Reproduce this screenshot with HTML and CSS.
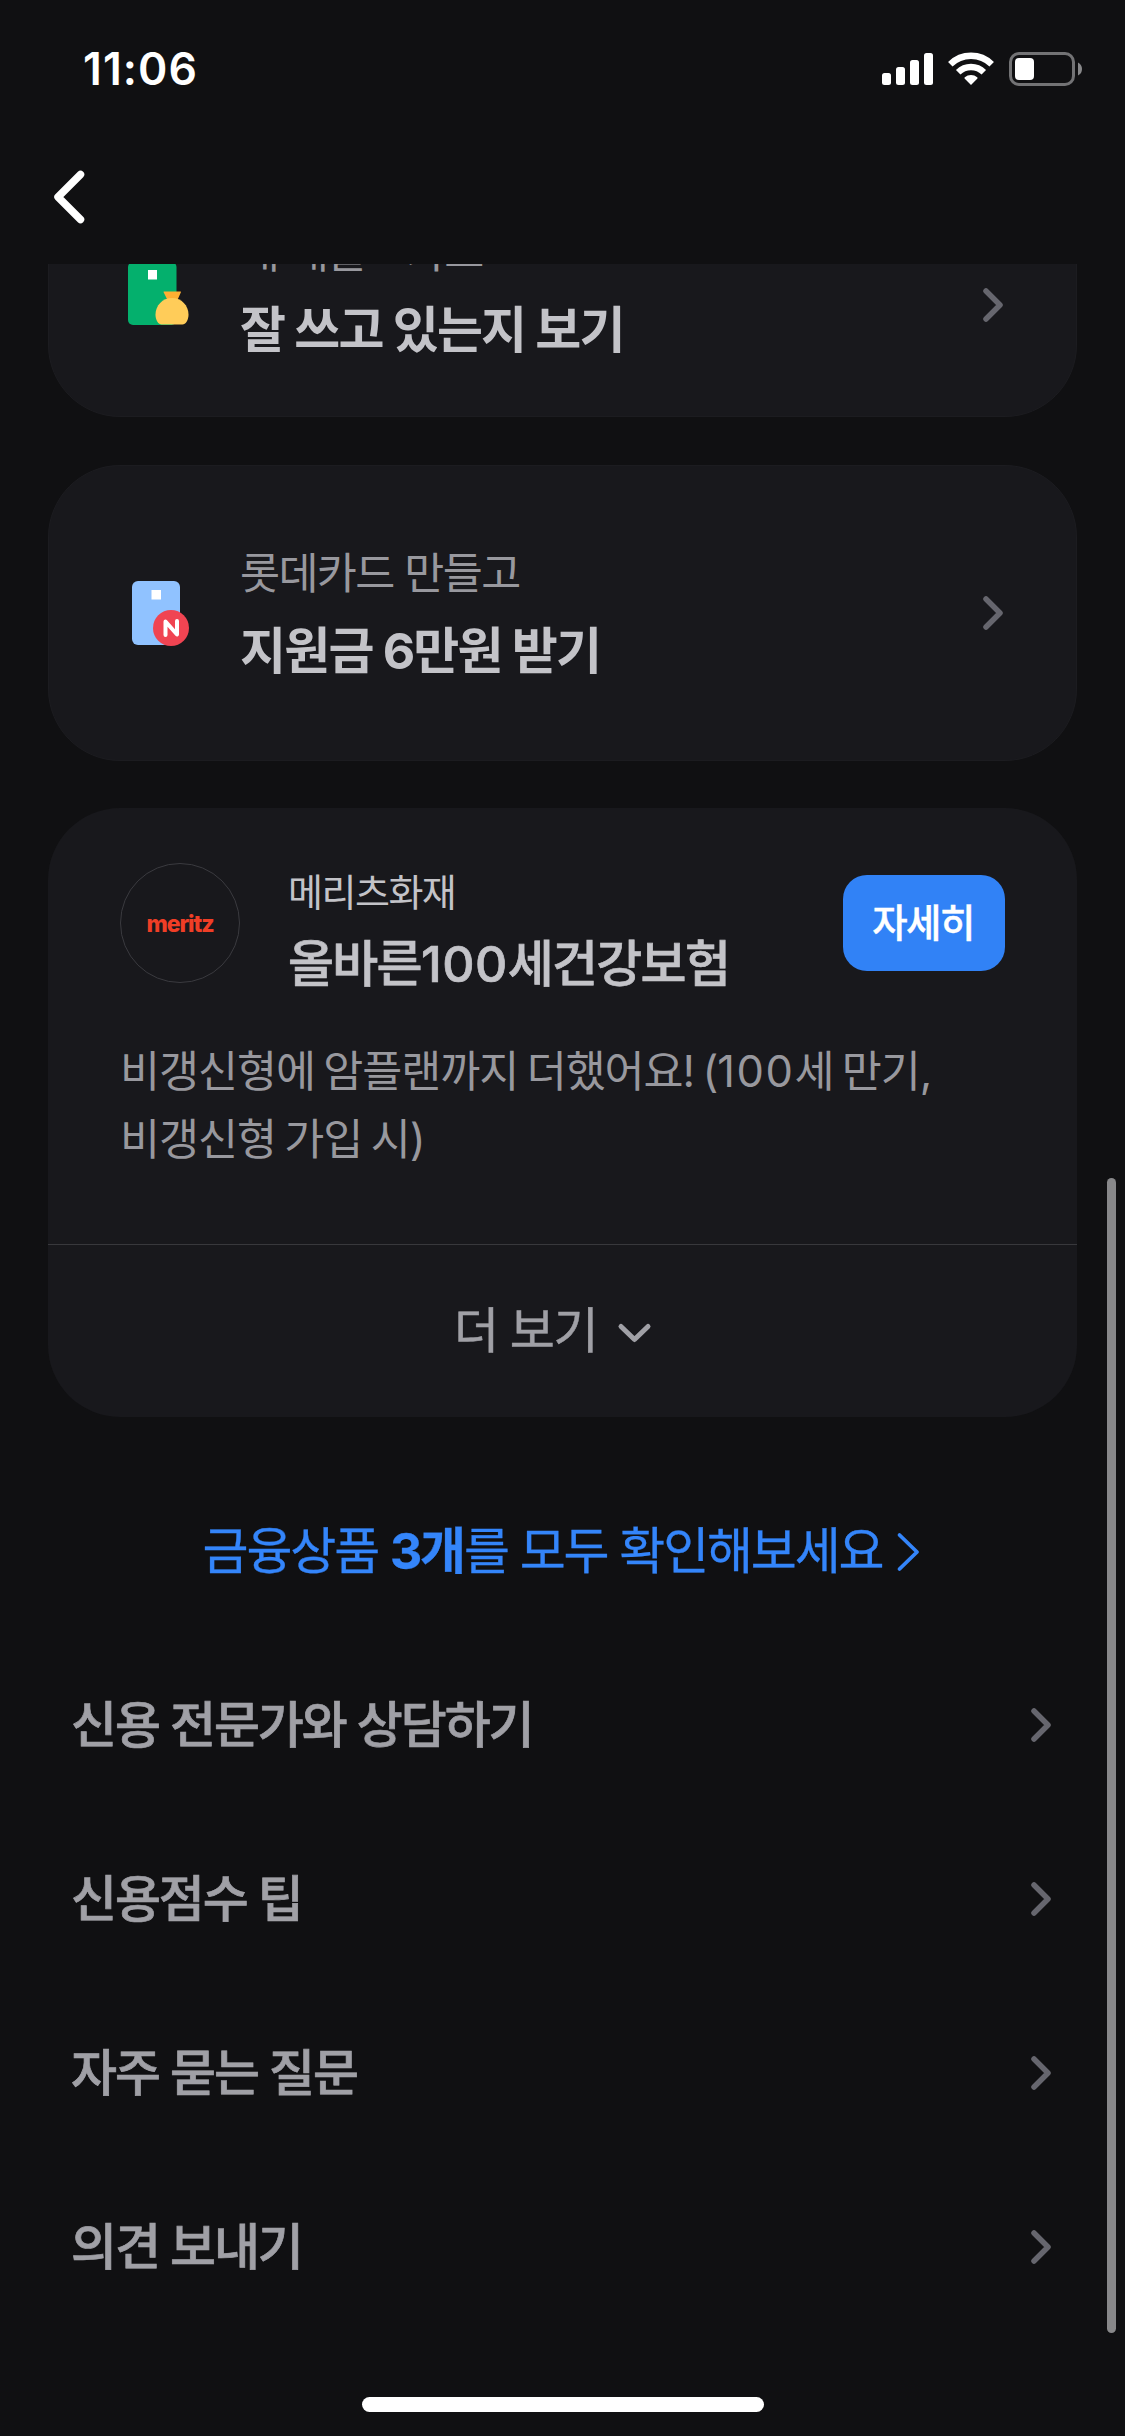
FILE: index.html
```html
<!DOCTYPE html>
<html lang="ko">
<head>
<meta charset="utf-8">
<title>신용관리</title>
<link rel="stylesheet" href="styles.css">
</head>
<body>
<div class="screen">
  <header class="top">
    <div class="status">
      <span class="clock">11:06</span>
      <svg class="status-icons" width="204" height="40" viewBox="0 0 204 40">
        <g fill="#fff">
          <rect x="2" y="23" width="9" height="12" rx="2.5"/>
          <rect x="16" y="17" width="9" height="18" rx="2.5"/>
          <rect x="30" y="10" width="9" height="25" rx="2.5"/>
          <rect x="44" y="3" width="9" height="32" rx="2.5"/>
          <rect x="135" y="8" width="19" height="22" rx="4"/>
          <path d="M91 35l-6.200-6.200a1 1 0 0 1 0-1.500a9.500 9.500 0 0 1 12.400 0a1 1 0 0 1 0 1.500z"/>
        </g>
        <g fill="none" stroke="#fff" stroke-width="6.400">
          <path d="M70.300 14.300a29.500 29.500 0 0 1 41.400 0"/>
          <path d="M78.200 22.300a18.200 18.200 0 0 1 25.600 0"/>
        </g>
        <rect x="130.500" y="3.500" width="63" height="31" rx="8.500" fill="none" stroke="#737375" stroke-width="3"/>
        <path d="M198 12.500q4 2 4 6.500t-4 6.500z" fill="#88888a"/>
      </svg>
    </div>
    <svg class="back" width="36" height="60" viewBox="0 0 36 60"><path d="M30.500 7.500L8 30l22.500 22.500" fill="none" stroke="#fff" stroke-width="7.500" stroke-linecap="round" stroke-linejoin="round"/></svg>
  </header>

  <main class="scroll">
    <a class="card promo promo-first">
      <svg class="promo-icon" width="72" height="72" viewBox="0 0 72 72">
        <rect x="8" y="5" width="48.500" height="63" rx="5" fill="#04b06d"/>
        <rect x="28" y="13" width="9" height="9.500" fill="#fff"/>
        <path d="M44 34.500h16.500q.8 0 .4.800L57.500 43h-10l-3.900-7.700q-.4-.8.400-.8z" fill="#ffaf32"/>
        <path d="M52 41c9.500 0 16.500 7.500 16.500 16.500c0 6-3 10-6 10H41.500c-3 0-6-4-6-10C35.500 48.500 42.500 41 52 41z" fill="#ffcc59"/>
      </svg>
      <div class="promo-text">
        <p class="promo-sub">내 대출<span class="dot">·</span>카드</p>
        <p class="promo-title">잘 쓰고 있는지 보기</p>
      </div>
      <svg class="chev" width="24" height="36" viewBox="0 0 24 36"><path d="M5 4L19 18L5 32"/></svg>
    </a>

    <a class="card promo">
      <svg class="promo-icon" width="72" height="72" viewBox="0 0 72 72">
        <rect x="12" y="4" width="48" height="64" rx="6" fill="#90c2ff"/>
        <rect x="31.500" y="13" width="9.500" height="9.500" fill="#fff"/>
        <circle cx="51" cy="51" r="18" fill="#f04452"/>
        <path d="M45.500 58V44.500L57 57.500V44" fill="none" stroke="#fff" stroke-width="4" stroke-linecap="round" stroke-linejoin="round"/>
      </svg>
      <div class="promo-text">
        <p class="promo-sub">롯데카드 만들고</p>
        <p class="promo-title">지원금 6만원 받기</p>
      </div>
      <svg class="chev" width="24" height="36" viewBox="0 0 24 36"><path d="M5 4L19 18L5 32"/></svg>
    </a>

    <section class="card offer">
      <div class="offer-head">
        <div class="logo">meritz</div>
        <div class="offer-text">
          <p class="offer-company">메리츠화재</p>
          <p class="offer-name">올바른<span class="num">100</span>세건강보험</p>
        </div>
        <button class="detail" type="button">자세히</button>
      </div>
      <p class="offer-desc">비갱신형에 암플랜까지 더했어요! (<span class="num">100</span>세 만기,<br>비갱신형 가입 시)</p>
      <a class="more">
        <span>더 보기</span>
        <svg width="36" height="24" viewBox="0 0 36 24"><path d="M4 4.500L17.500 17.500L31 4.500" fill="none" stroke="#a0a0a6" stroke-width="5" stroke-linecap="round" stroke-linejoin="round"/></svg>
      </a>
    </section>

    <a class="all">
      <span>금융상품 <b>3개</b>를 모두 확인해보세요</span>
      <svg width="24" height="42" viewBox="0 0 24 42"><path d="M3.500 4L21 21L3.500 38" fill="none" stroke="#3485fa" stroke-width="3.800" stroke-linecap="round" stroke-linejoin="round"/></svg>
    </a>

    <nav class="links">
      <a class="link"><span>신용 전문가와 상담하기</span><svg class="chev" width="24" height="36" viewBox="0 0 24 36"><path d="M5 4L19 18L5 32"/></svg></a>
      <a class="link"><span>신용점수 팁</span><svg class="chev" width="24" height="36" viewBox="0 0 24 36"><path d="M5 4L19 18L5 32"/></svg></a>
      <a class="link"><span>자주 묻는 질문</span><svg class="chev" width="24" height="36" viewBox="0 0 24 36"><path d="M5 4L19 18L5 32"/></svg></a>
      <a class="link"><span>의견 보내기</span><svg class="chev" width="24" height="36" viewBox="0 0 24 36"><path d="M5 4L19 18L5 32"/></svg></a>
    </nav>
  </main>

  <footer class="bottom"><div class="home-bar"></div></footer>
  <div class="scrollbar"></div>
</div>
</body>
</html>
```
FILE: styles.css
```css
* { box-sizing: border-box; }

body {
  margin: 0;
  background: #101012;
  font-family: Inter, "Noto Sans CJK KR", sans-serif;
}

p { margin: 0; white-space: nowrap; }

.screen {
  position: relative;
  width: 1125px;
  height: 2436px;
  display: flex;
  flex-direction: column;
  overflow: hidden;
}

.top {
  height: 264px;
  flex: none;
  display: flex;
  flex-direction: column;
}

.status {
  display: flex;
  justify-content: space-between;
  align-items: flex-start;
  padding: 49px 41px 0 83px;
  height: 167px;
}

.clock {
  color: #fff;
  font-size: 44.500px;
  line-height: 40px;
  font-weight: 600;
  letter-spacing: 1.100px;
}

.status-icons { margin-top: 1px; }

.back { margin-left: 50px; }

.scroll {
  height: 2070px;
  flex: none;
  overflow: hidden;
  display: flex;
  flex-direction: column;
}

.card {
  flex: none;
  margin: 0 48px 47px;
  border-radius: 72px;
  background: #18181c;
}

.promo {
  height: 296px;
  padding: 0 71px 0 71px;
  display: flex;
  align-items: center;
  gap: 48px;
  border: 1px solid #1c1c20;
}

.promo-first {
  margin-top: -143px;
  margin-bottom: 48px;
  padding-top: 47px;
}

.promo-first .chev { margin-top: 24px; }

.promo-icon { flex: none; }

.promo-text { flex: 1; }

.promo-sub {
  color: #98989e;
  font-size: 43.500px;
  line-height: 75px;
  letter-spacing: -1.600px;
}

.dot { margin: 0 15px 0 14px; }

.promo-title {
  color: #c3c3c8;
  font-size: 50px;
  line-height: 80px;
  font-weight: 700;
  letter-spacing: -1.800px;
}

.chev {
  flex: none;
  fill: none;
  stroke: #66666e;
  stroke-width: 5.500px;
  stroke-linecap: round;
  stroke-linejoin: round;
}

.offer { padding-top: 55px; margin-bottom: 0; }

.offer-head {
  display: flex;
  align-items: flex-start;
  gap: 48px;
  height: 138px;
  padding: 0 72px;
}

.logo {
  flex: none;
  width: 120px;
  height: 120px;
  border: 1.500px solid #3a3a3f;
  border-radius: 50%;
  color: #f03e26;
  font-size: 23px;
  font-weight: 800;
  line-height: 121px;
  text-align: center;
  letter-spacing: -1.100px;
}

.offer-text { flex: 1; margin-top: -4px; }

.offer-company {
  color: #c3c3c8;
  font-size: 38px;
  line-height: 66px;
  letter-spacing: -1.500px;
}

.offer-name {
  color: #c3c3c8;
  font-size: 50px;
  line-height: 79px;
  font-weight: 500;
  letter-spacing: -1.700px;
  -webkit-text-stroke: .7px currentColor;
}

.num { letter-spacing: .5px; }

.offer-desc .num { letter-spacing: 1.500px; }

.detail {
  flex: none;
  width: 162px;
  height: 96px;
  margin: 12px 0 0;
  padding: 0 2px 0 0;
  border: 0;
  border-radius: 24px;
  background: #3182f6;
  color: #fff;
  font: 500 38.500px/96px Inter, "Noto Sans CJK KR", sans-serif;
  letter-spacing: -1.600px;
  -webkit-text-stroke: .4px currentColor;
}

.offer-desc {
  margin: 36px 72px 71px;
  color: #98989e;
  font-size: 43.500px;
  line-height: 68px;
  letter-spacing: -1.050px;
  word-spacing: -2.700px;
}

.more {
  display: flex;
  align-items: center;
  justify-content: center;
  gap: 20px;
  height: 173px;
  padding-right: 18px;
  border-top: 1px solid #38383c;
  color: #a0a0a6;
  font-size: 49px;
  line-height: 60px;
  letter-spacing: -1.500px;
  -webkit-text-stroke: .5px currentColor;
}

.more span { margin-top: -1px; }

.more svg { margin-top: 5px; }

.all {
  flex: none;
  height: 221px;
  padding-top: 48px;
  padding-right: 2px;
  display: flex;
  align-items: center;
  justify-content: center;
  gap: 14px;
  color: #3485fa;
  font-size: 50px;
  line-height: 60px;
  letter-spacing: -2.150px;
  -webkit-text-stroke: .3px currentColor;
}

.all b { font-weight: 700; }

.all span { margin-top: -1px; }

.links { display: flex; flex-direction: column; }

.link {
  height: 174px;
  padding: 0 72px 0 71px;
  display: flex;
  align-items: center;
  justify-content: space-between;
  color: #a0a0a6;
  font-size: 50px;
  line-height: 60px;
  font-weight: 500;
  letter-spacing: -2.100px;
  -webkit-text-stroke: .7px currentColor;
}

.bottom {
  flex: 1;
  display: flex;
  justify-content: center;
  align-items: flex-end;
  padding-bottom: 24px;
}

.home-bar {
  width: 402px;
  height: 15px;
  border-radius: 8px;
  background: #fff;
}

.scrollbar {
  position: absolute;
  left: 1107px;
  top: 1178px;
  width: 9px;
  height: 1155px;
  border-radius: 5px;
  background: #88888a;
}
```
